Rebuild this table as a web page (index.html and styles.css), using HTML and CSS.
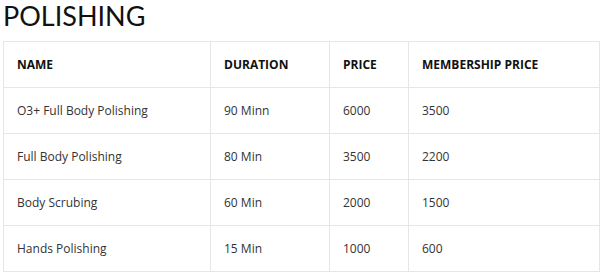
FILE: index.html
```html
<!DOCTYPE html>
<html>
<head>
<meta charset="utf-8">
<link rel="stylesheet" href="styles.css">
</head>
<body>
<div class="wrap">
  <h2 class="title">POLISHING</h2>
  <table class="price-table">
    <thead>
      <tr><th class="c1">NAME</th><th class="c2">DURATION</th><th class="c3">PRICE</th><th class="c4">MEMBERSHIP PRICE</th></tr>
    </thead>
    <tbody>
      <tr><td>O3+ Full Body Polishing</td><td>90 Minn</td><td>6000</td><td>3500</td></tr>
      <tr><td>Full Body Polishing</td><td>80 Min</td><td>3500</td><td>2200</td></tr>
      <tr><td>Body Scrubing</td><td>60 Min</td><td>2000</td><td>1500</td></tr>
      <tr><td>Hands Polishing</td><td>15 Min</td><td>1000</td><td>600</td></tr>
    </tbody>
  </table>
</div>
</body>
</html>
```
FILE: styles.css
```css
html, body { margin: 0; padding: 0; background: #fff; }
.wrap { padding: 0 4px 0 3px; }
.title {
  margin: 0;
  height: 41px;
  font-family: "Lato", sans-serif;
  font-weight: 400;
  font-size: 27px;
  line-height: 32px;
  color: #111;
  letter-spacing: 0;
}
.price-table {
  width: 597px;
  table-layout: fixed;
  border-collapse: collapse;
  font-family: "Open Sans", sans-serif;
  font-size: 12px;
  color: #333;
}
.price-table th, .price-table td {
  border: 1px solid #e6e6e6;
  height: 45px;
  padding: 0 0 0 13px;
  text-align: left;
  vertical-align: middle;
}
.price-table th { font-weight: 700; color: #111; }
.c1 { width: 193px; }
.c2 { width: 105px; }
.c3 { width: 65px; }
```
